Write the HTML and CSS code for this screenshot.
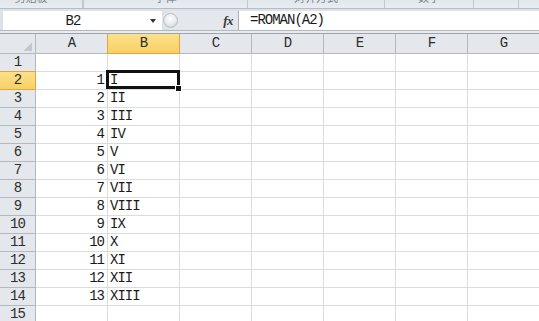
FILE: index.html
```html
<!DOCTYPE html>
<html lang="zh-CN">
<head>
  <meta charset="UTF-8" />
  <title>ROMAN</title>
  <link rel="stylesheet" href="styles.css">
</head>
<body>
  <!-- ribbon group labels (cut off at the top) -->
  <div class="ribbon">
    <div class="group g1"><span>剪贴板</span></div>
    <div class="group g2"><span>字体</span></div>
    <div class="group g3"><span>对齐方式</span></div>
    <div class="group g4"><span>数字</span></div>
    <div class="group g5"></div>
    <div class="group g6"></div>
  </div>

  <!-- formula bar -->
  <div class="formula-row">
    <div class="namebox">
      <span class="name">B2</span>
      <span class="arrow"></span>
    </div>
    <div class="slider">
      <span class="ball"></span>
      <span class="fx">fx</span>
    </div>
    <div class="formula">=ROMAN(A2)</div>
  </div>
  <div class="bar-gap"></div>

  <!-- grid -->
  <div class="sheet">
    <div class="hd corner"></div>
    <div class="hd col">A</div>
    <div class="hd col on">B</div>
    <div class="hd col">C</div>
    <div class="hd col">D</div>
    <div class="hd col">E</div>
    <div class="hd col">F</div>
    <div class="hd col">G</div>

    <div class="hd row">1</div>
    <div class="c"></div><div class="c"></div><div class="c"></div><div class="c"></div><div class="c"></div><div class="c"></div><div class="c"></div>

    <div class="hd row on">2</div>
    <div class="c num">1</div><div class="c txt sel">I</div><div class="c"></div><div class="c"></div><div class="c"></div><div class="c"></div><div class="c"></div>

    <div class="hd row">3</div>
    <div class="c num">2</div><div class="c txt">II</div><div class="c"></div><div class="c"></div><div class="c"></div><div class="c"></div><div class="c"></div>

    <div class="hd row">4</div>
    <div class="c num">3</div><div class="c txt">III</div><div class="c"></div><div class="c"></div><div class="c"></div><div class="c"></div><div class="c"></div>

    <div class="hd row">5</div>
    <div class="c num">4</div><div class="c txt">IV</div><div class="c"></div><div class="c"></div><div class="c"></div><div class="c"></div><div class="c"></div>

    <div class="hd row">6</div>
    <div class="c num">5</div><div class="c txt">V</div><div class="c"></div><div class="c"></div><div class="c"></div><div class="c"></div><div class="c"></div>

    <div class="hd row">7</div>
    <div class="c num">6</div><div class="c txt">VI</div><div class="c"></div><div class="c"></div><div class="c"></div><div class="c"></div><div class="c"></div>

    <div class="hd row">8</div>
    <div class="c num">7</div><div class="c txt">VII</div><div class="c"></div><div class="c"></div><div class="c"></div><div class="c"></div><div class="c"></div>

    <div class="hd row">9</div>
    <div class="c num">8</div><div class="c txt">VIII</div><div class="c"></div><div class="c"></div><div class="c"></div><div class="c"></div><div class="c"></div>

    <div class="hd row">10</div>
    <div class="c num">9</div><div class="c txt">IX</div><div class="c"></div><div class="c"></div><div class="c"></div><div class="c"></div><div class="c"></div>

    <div class="hd row">11</div>
    <div class="c num">10</div><div class="c txt">X</div><div class="c"></div><div class="c"></div><div class="c"></div><div class="c"></div><div class="c"></div>

    <div class="hd row">12</div>
    <div class="c num">11</div><div class="c txt">XI</div><div class="c"></div><div class="c"></div><div class="c"></div><div class="c"></div><div class="c"></div>

    <div class="hd row">13</div>
    <div class="c num">12</div><div class="c txt">XII</div><div class="c"></div><div class="c"></div><div class="c"></div><div class="c"></div><div class="c"></div>

    <div class="hd row">14</div>
    <div class="c num">13</div><div class="c txt">XIII</div><div class="c"></div><div class="c"></div><div class="c"></div><div class="c"></div><div class="c"></div>

    <div class="hd row">15</div>
    <div class="c"></div><div class="c"></div><div class="c"></div><div class="c"></div><div class="c"></div><div class="c"></div><div class="c"></div>
  </div>
</body>
</html>
```

FILE: styles.css
```css
html, body {
  margin: 0;
  padding: 0;
  overflow: hidden;
  height: 100%;
  background: #fff;
  font-family: 'Liberation Mono', 'Noto Sans CJK SC', monospace;
  font-size: 14px;
  color: #1a1a1a;
}

/* ribbon strip */
.ribbon {
  display: flex;
  height: 8px;
  background: linear-gradient(#e2e7ed, #e9edf2);
  border-bottom: 1px solid #b7bcc3;
  overflow: hidden;
}

.group {
  box-sizing: border-box;
  height: 8px;
  border-right: 1px solid #c3c8cf;
  text-align: center;
  overflow: hidden;
}

.group span {
  display: block;
  margin-top: -9px;
  font-family: 'Noto Sans CJK SC', sans-serif;
  font-size: 11px;
  line-height: 12px;
  color: #7c838d;
}

.g1 { width: 83px; padding-right: 20px; }
.g2 { width: 165px; border-left: 1px solid #c3c8cf; }
.g3 { width: 137px; }
.g4 { width: 89px; }
.g5 { width: 45px; }
.g6 { flex: 1; border-right: none; }

/* formula bar */
.formula-row {
  display: flex;
  height: 21px;
  box-sizing: border-box;
  padding: 2px 0 0 3px;
  background: #dde2e8;
}

.namebox {
  position: relative;
  width: 159px;
  height: 19px;
  background: #fff;
  display: flex;
  align-items: center;
}

.name {
  width: 140px;
  text-align: center;
  letter-spacing: -1px;
}

.arrow {
  width: 0;
  height: 0;
  margin-left: 7px;
  border-left: 3px solid transparent;
  border-right: 3px solid transparent;
  border-top: 4px solid #333;
}

.slider {
  width: 77px;
  height: 19px;
  box-sizing: border-box;
  background: #e4e8ed;
  border-right: 1px solid #a9afb7;
  border-radius: 10px 0 0 10px;
  display: flex;
  align-items: center;
  justify-content: space-between;
  padding-right: 5px;
}

.ball {
  width: 15px;
  height: 15px;
  margin-left: 1px;
  border-radius: 50%;
  box-sizing: border-box;
  border: 1px solid #b6bcc4;
  background: radial-gradient(circle at 50% 35%, #ffffff 0%, #e6e9ed 55%, #c9ced5 100%);
}

.fx {
  font-family: 'Liberation Serif', serif;
  font-style: italic;
  font-weight: bold;
  font-size: 13px;
  color: #3a3a3a;
  letter-spacing: -0.5px;
}

.formula {
  flex: 1;
  height: 19px;
  line-height: 19px;
  background: #fff;
  padding-left: 11px;
  letter-spacing: -1px;
}

.bar-gap {
  height: 2px;
  border-top: 1px solid #b3b8bf;
  background: #e8ebef;
}

/* sheet grid */
.sheet {
  display: grid;
  grid-template-columns: 36px repeat(7, 72px);
  grid-template-rows: 20px repeat(15, 18px);
  border-top: 1px solid #9ea4ac;
}

.c, .hd {
  box-sizing: border-box;
  border-right: 1px solid #dadcdd;
  border-bottom: 1px solid #dadcdd;
  line-height: 17px;
  letter-spacing: -1px;
  white-space: nowrap;
}

.hd {
  background: #e4e8ed;
  border-color: #b4b9c0;
  color: #2d2d2d;
  text-align: center;
}

.hd.col {
  line-height: 19px;
}

.hd.on {
  background: linear-gradient(#fbe08c, #f8d163);
  border-color: #e2a43f;
}

.hd.col.on {
  box-shadow: -1px 0 0 #e2a43f;
}

.hd.row.on {
  box-shadow: 0 -1px 0 #e2a43f;
}

.corner {
  background:
    linear-gradient(135deg, transparent 50%, #c2c7ce 50%) right 3px bottom 2px / 9px 9px no-repeat,
    #e4e8ed;
}

.num {
  text-align: right;
  padding-right: 3px;
}

.txt {
  padding-left: 2px;
}

.sel {
  position: relative;
}

.sel::after {
  content: '';
  position: absolute;
  left: -2px;
  top: -2px;
  right: -1px;
  bottom: 0;
  border: 3px solid #111;
}

.sel::before {
  content: '';
  position: absolute;
  right: -3px;
  bottom: -3px;
  width: 5px;
  height: 5px;
  background: #111;
  border: 1px solid #fff;
  z-index: 1;
}
```
